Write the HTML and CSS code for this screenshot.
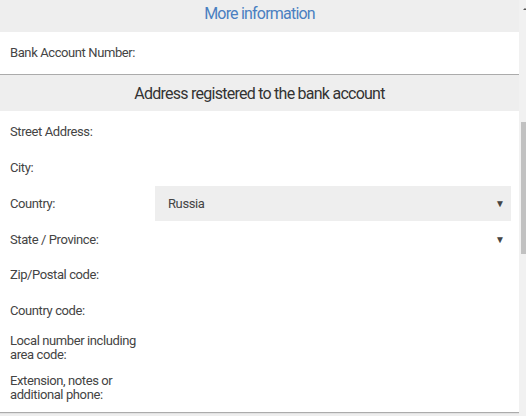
FILE: index.html
```
<!DOCTYPE html>
<html>
<head>
<meta charset="utf-8">
<link rel="stylesheet" href="styles.css">
</head>
<body>
<div class="page">
  <div class="main">
    <div class="band band-link">More information</div>
    <div class="card single">
      <div class="label">Bank Account Number:</div>
    </div>
    <div class="band band-title">Address registered to the bank account</div>
    <div class="card form">
      <div class="row"><div class="label">Street Address:</div><div class="field"></div></div>
      <div class="row"><div class="label">City:</div><div class="field"></div></div>
      <div class="row"><div class="label">Country:</div><div class="field select filled"><span>Russia</span><span class="arrow">▼</span></div></div>
      <div class="row"><div class="label">State / Province:</div><div class="field select"><span></span><span class="arrow">▼</span></div></div>
      <div class="row short"><div class="label">Zip/Postal code:</div><div class="field"></div></div>
      <div class="row"><div class="label">Country code:</div><div class="field"></div></div>
      <div class="row tall"><div class="label">Local number including<br>area code:</div><div class="field"></div></div>
      <div class="row tall"><div class="label">Extension, notes or<br>additional phone:</div><div class="field"></div></div>
    </div>
  </div>
  <div class="scrollbar">
    <div class="up"></div>
    <div class="thumb"></div>
  </div>
</div>
</body>
</html>
```
FILE: styles.css
```
html, body {
  margin: 0;
  padding: 0;
  background: #eeeeee;
}
body {
  font-family: Roboto, "Liberation Sans", sans-serif;
  font-size: 13px;
  letter-spacing: -0.4px;
  color: #444;
}
.page {
  display: flex;
  height: 416px;
  overflow: hidden;
}
.main {
  width: 519px;
  flex: none;
}
.band {
  display: flex;
  align-items: center;
  justify-content: center;
  background: #eeeeee;
}
.band-link {
  height: 32px;
  font-size: 16px;
  letter-spacing: -0.8px;
  color: #4a7fc1;
  padding-bottom: 6px;
  box-sizing: border-box;
}
.band-title {
  height: 36px;
  margin-top: 1px;
  font-size: 16px;
  letter-spacing: -0.75px;
  color: #333;
}
.card {
  background: #fff;
  box-shadow: 0 1px 1px rgba(0,0,0,0.28);
}
.single {
  height: 42px;
  display: flex;
  align-items: center;
  padding-left: 10px;
  padding-bottom: 2px;
  box-sizing: border-box;
}
.form {
  padding: 2px 0 4px 0;
}
.row {
  display: flex;
  align-items: center;
  height: 36px;
  padding-left: 10px;
}
.row.short { height: 35px; }
.row.tall { height: 40px; line-height: 14px; }
.label {
  width: 145px;
  flex: none;
}
.field {
  width: 356px;
  height: 35px;
  flex: none;
  display: flex;
  align-items: center;
  justify-content: space-between;
  box-sizing: border-box;
  padding: 0 6px 0 13px;
}
.select.filled {
  background: #eeeeee;
}
.arrow {
  font-size: 10px;
  color: #444;
  letter-spacing: 0;
}
.scrollbar {
  width: 7px;
  flex: none;
  background: #f1f1f1;
  position: relative;
}
.up {
  position: absolute;
  left: 4px;
  top: 8px;
  width: 0;
  height: 0;
  border-left: 2px solid transparent;
  border-right: 2px solid transparent;
  border-bottom: 2px solid #555;
}
.thumb {
  position: absolute;
  left: 2px;
  right: 0;
  top: 122px;
  height: 132px;
  background: #c1c1c1;
}
```
